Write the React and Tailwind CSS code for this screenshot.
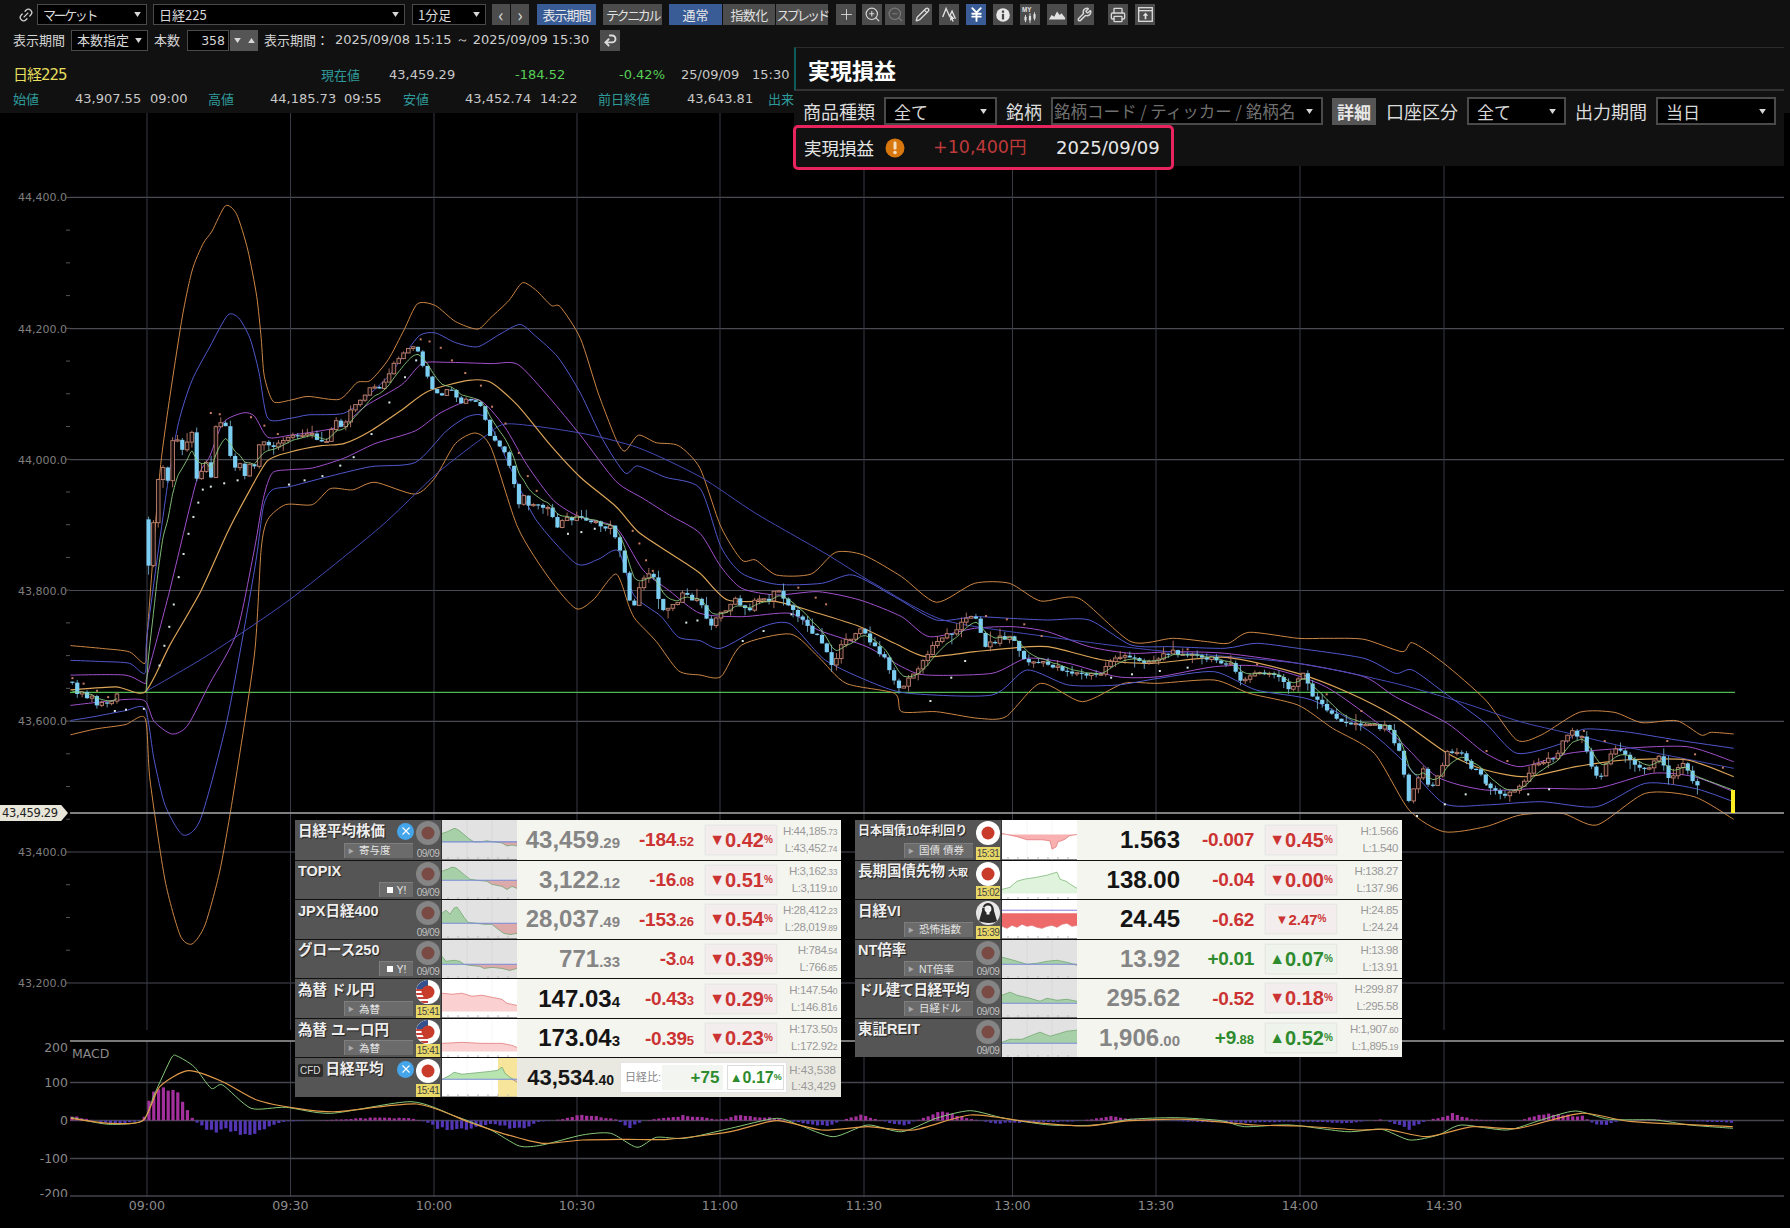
import React from "react";
import { Link2, Plus, ZoomIn, ZoomOut, Pencil, Wrench, Printer, JapaneseYen, Undo2 } from "lucide-react";

const c5 = (a) => a.map(([x, y]) => [x / 2.24, y / 2.376 + 170]);
const c7 = (a) => a.map(([x, y]) => [x / 1.4385 + 700, y / 3 + 400]);
const c6 = (a) => a.map(([x, y]) => [x / 0.876, y / 3 + 1030]);
const rnd = (i) => { const s = Math.sin(i * 12.9898) * 43758.5453; return s - Math.floor(s); };

function smooth(p) {
  let d = `M${p[0][0].toFixed(1)} ${p[0][1].toFixed(1)}`;
  for (let i = 0; i < p.length - 1; i++) {
    const a = p[Math.max(i - 1, 0)], b = p[i], c = p[i + 1], e = p[Math.min(i + 2, p.length - 1)];
    const t = 0.12;
    d += `C${(b[0] + (c[0] - a[0]) * t).toFixed(1)} ${(b[1] + (c[1] - a[1]) * t).toFixed(1)} ${(c[0] - (e[0] - b[0]) * t).toFixed(1)} ${(c[1] - (e[1] - b[1]) * t).toFixed(1)} ${c[0].toFixed(1)} ${c[1].toFixed(1)}`;
  }
  return d;
}
function interp(p, x) {
  if (x <= p[0][0]) return p[0][1];
  for (let i = 0; i < p.length - 1; i++) if (x <= p[i + 1][0]) {
    const t = (x - p[i][0]) / Math.max(p[i + 1][0] - p[i][0], 0.01);
    return p[i][1] + (p[i + 1][1] - p[i][1]) * t;
  }
  return p[p.length - 1][1];
}

const orangeUp = [...c5([[158,1130],[230,1137],[290,1145],[325,1172],[330,1100],[360,700],[405,370],[430,240],[455,175],[475,145],[505,85],[530,105],[555,190],[575,300],[585,400],[592,490],[612,550],[650,547],[690,538],[760,545],[800,505],[830,500],[870,450],[905,380],[935,318],[975,322],[1020,360],[1070,378],[1100,350],[1140,310],[1170,268],[1200,285],[1235,322],[1255,325],[1300,400],[1340,530],[1380,640],[1400,668],[1430,630],[1470,648],[1520,655]]), ...c7([[0,205],[30,380],[60,480],[80,480],[110,525],[160,522],[195,457],[235,465],[290,530],[340,607],[395,550],[445,550],[490,603],[545,595],[620,725],[680,715],[730,725],[760,730],[790,697],[860,715],[900,715],[955,718],[1010,755],[1025,728],[1070,790],[1130,900],[1175,1020],[1210,1005],[1265,937],[1315,937],[1355,968],[1405,962],[1440,1005],[1455,997],[1487,1002]])];
const blueUp = [...c5([[158,1165],[230,1168],[290,1172],[325,1195],[330,1100],[375,750],[400,600],[430,500],[470,420],[510,345],[535,352],[560,400],[580,480],[600,590],[650,590],[690,582],[770,578],[820,540],[870,490],[905,440],[940,393],[975,387],[1020,410],[1070,420],[1120,390],[1165,367],[1200,395],[1250,445],[1300,530],[1350,640],[1400,720],[1428,703],[1490,730]]), ...c7([[0,265],[30,440],[60,520],[110,553],[175,550],[220,525],[280,590],[340,660],[395,650],[445,655],[500,660],[560,660],[620,735],[680,740],[755,745],[800,730],[860,745],[955,775],[1000,820],[1025,810],[1075,885],[1130,970],[1175,1060],[1240,1030],[1270,988],[1330,995],[1405,1020],[1487,1045]])];
const purpleUp = [...c5([[158,1200],[280,1200],[325,1220],[330,1200],[380,1000],[440,740],[470,680],[500,600],[545,577],[570,585],[600,635],[650,630],[760,610],[820,560],[900,510],[945,460],[1000,457],[1100,460],[1160,462],[1230,540],[1300,630],[1380,740],[1440,780],[1500,820]]), ...c7([[0,400],[30,500],[60,565],[110,585],[170,575],[230,600],[290,650],[330,710],[395,685],[450,680],[500,695],[560,740],[620,760],[680,755],[755,760],[860,790],[955,830],[1000,890],[1075,970],[1130,1060],[1180,1100],[1250,1060],[1330,1045],[1420,1040],[1487,1085]])];
const mid = [...c5([[158,1235],[260,1228],[325,1240],[380,1130],[450,1000],[510,860],[560,760],[600,690],[650,670],[720,655],[770,650],[830,620],[900,570],[960,525],[1050,500],[1100,505],[1160,560],[1230,650],[1300,730],[1380,800],[1430,860],[1500,910]]), ...c7([[0,520],[40,600],[110,605],[170,640],[230,680],[280,730],[325,770],[395,755],[445,745],[500,740],[580,780],[650,790],[755,772],[860,820],[930,875],[1000,950],[1075,1060],[1130,1110],[1190,1130],[1260,1100],[1330,1080],[1420,1080],[1487,1130]])];
const purpleDn = [...c5([[158,1272],[280,1258],[325,1262],[345,1310],[385,1340],[420,1320],[470,1220],[530,1100],[570,900],[590,780],[610,720],[650,712],[700,708],[770,685],[840,650],[930,620],[990,575],[1070,545],[1130,610],[1180,700],[1240,785],[1300,825],[1380,850],[1440,950],[1500,1000]]), ...c7([[0,640],[60,650],[130,640],[170,690],[240,740],[290,800],[325,825],[420,820],[470,775],[530,790],[600,830],[660,830],[740,800],[810,800],[900,860],[1000,1010],[1060,1130],[1130,1170],[1210,1165],[1290,1165],[1370,1120],[1430,1130],[1487,1175]])];
const blueDn = [...c5([[158,1308],[215,1298],[280,1285],[325,1280],[345,1400],[370,1510],[410,1580],[450,1540],[510,1300],[570,950],[590,800],[610,760],[650,752],[730,730],[830,705],[930,695],[1000,620],[1050,585],[1090,590],[1140,700],[1200,830],[1290,935],[1340,925],[1385,905],[1420,1010],[1480,1060],[1520,1110]]), ...c7([[0,722],[30,745],[90,680],[130,672],[180,780],[250,850],[300,880],[420,885],[470,810],[530,855],[600,855],[660,835],[740,815],[800,870],[880,900],[960,990],[1010,1080],[1070,1210],[1130,1215],[1210,1205],[1290,1220],[1360,1150],[1430,1165],[1487,1205]])];
const orangeDn = [...c5([[158,1342],[215,1328],[280,1318],[325,1303]]), [150,780],[165,880],[180,935],[192,944],[205,925],[220,870],[234,790], ...c5([[570,1150],[585,900],[600,830],[640,795],[700,795],[740,757],[790,760],[840,742],[930,770],[975,730],[1020,650],[1065,625],[1100,660],[1160,850],[1230,970],[1290,1042],[1330,1020],[1380,960],[1410,1040],[1425,1070],[1470,1120],[1520,1190]]), ...c7([[0,825],[30,830],[60,735],[130,702],[170,770],[210,850],[280,880],[290,935],[340,935],[400,955],[440,950],[490,850],[550,905],[610,850],[660,850],[740,840],[790,880],[860,915],[910,985],[970,1060],[1020,1230],[1070,1295],[1130,1280],[1180,1245],[1240,1240],[1290,1275],[1360,1180],[1430,1190],[1487,1258]])];
const longMa = [...c5([[325,1240],[470,1150],[650,1020],[850,850],[980,720],[1090,630],[1140,603],[1300,625],[1430,660]]), ...c7([[0,230],[80,340],[180,460],[250,550],[350,660],[500,710],[650,750],[860,790],[1000,850],[1100,910],[1180,965],[1250,1000],[1330,1040],[1487,1105]])];

const pricePre = c5([[162,1218],[173,1245],[184,1240],[195,1255],[206,1250],[217,1272],[228,1265],[240,1268],[250,1262],[262,1245]]);
const price = [...c5([[333,940],[345,825],[355,730],[366,705],[378,745],[387,640],[397,640],[408,665],[420,650],[430,628],[441,740],[452,720],[462,690],[473,730],[484,608],[495,595],[506,610],[517,690],[528,712],[537,700],[547,735],[558,705],[570,700],[580,660],[590,650],[601,660],[620,655],[640,640],[660,630],[680,635],[700,630],[720,650],[735,640],[750,600],[770,610],[790,565],[810,550],[830,515],[850,520],[865,490],[885,460],[905,430],[920,415],[935,420],[945,465],[957,495],[975,535],[990,530],[1010,525],[1030,550],[1050,545],[1075,550],[1085,590],[1095,625],[1115,660],[1130,670],[1148,725],[1160,795],[1170,770],[1190,800],[1210,790],[1230,810],[1245,850],[1265,830],[1290,825],[1320,830],[1340,845],[1370,850],[1385,885],[1395,925],[1407,1020],[1420,1035],[1438,965],[1465,965],[1480,1040],[1500,1040],[1530,1010],[1550,1020]]), ...c7([[0,595],[15,680],[30,640],[50,600],[70,640],[80,590],[100,600],[112,565],[130,620],[150,670],[175,720],[190,795],[205,735],[230,685],[250,740],[270,790],[285,870],[300,840],[320,790],[340,720],[360,700],[380,660],[398,650],[410,740],[430,715],[450,710],[465,780],[490,790],[515,800],[530,815],[555,825],[575,825],[595,770],[620,775],[650,785],[670,760],[695,755],[720,775],[745,780],[765,790],[775,850],[795,820],[830,825],[850,870],[868,820],[880,890],[905,930],[920,970],[960,970],[990,985],[1005,1050],[1020,1200],[1040,1100],[1050,1180],[1075,1055],[1095,1060],[1110,1100],[1135,1155],[1160,1185],[1180,1160],[1200,1090],[1230,1070],[1250,990],[1270,1010],[1285,1110],[1295,1140],[1305,1075],[1320,1040],[1335,1080],[1360,1110],[1380,1070],[1395,1135],[1415,1090],[1425,1130],[1440,1170]])];

const buildCandles = () => {
  const out = [];
  let prev = pricePre[0][1] - 1;
  for (let i = 0; i < pricePre.length; i++) {
    const [x, y] = pricePre[i];
    out.push({ x, o: prev, c: y, hi: Math.min(prev, y) - rnd(i) * 3, lo: Math.max(prev, y) + rnd(i + 9) * 4 });
    prev = y;
  }
  prev = c5([[333, 830]])[0][1];
  const end = (1440 / 1.4385) + 700;
  for (let k = 0; 148.6 + 4.81 * k < end; k++) {
    const x = 148.6 + 4.81 * k;
    const c = interp(price, x) + (k > 6 ? (rnd(k + 40) - 0.5) * 5.5 : 0);
    out.push({ x, o: prev, c, hi: Math.min(prev, c) - rnd(k + 3) * rnd(k + 5) * 11, lo: Math.max(prev, c) + rnd(k + 11) * rnd(k + 13) * 11 });
    prev = c;
  }
  return out;
};
const candles = buildCandles();

const fast = (() => {
  const o = []; let e = 695;
  for (const c of candles) { e = e + (c.c - e) * 0.32; o.push([c.x, e]); }
  return o;
})();
const fastPre = fast.slice(0, pricePre.length);
const fastMain = [[146, 692], ...fast.slice(pricePre.length), [1733, 790]];

const dotsWhite = [...c5([[255,1283],[280,1280],[320,1278],[355,1175],[366,1128],[377,1083],[387,1030],[398,965],[409,910],[420,862],[431,822],[442,788],[452,757],[470,750],[500,742],[530,735],[645,745],[680,735],[720,725],[760,700],[790,680],[830,625],[870,550],[905,490],[930,450],[1270,862],[1300,858],[1330,850],[1535,1073],[1560,1068]]), ...c7([[60,720],[90,690],[130,640],[330,900],[360,830],[380,780],[590,830],[620,820],[660,810],[700,800],[1030,1245],[1070,1210],[1100,1180],[1130,1150],[1190,1180],[1220,1165]])];
const dotsRed = [...c5([[160,1205],[185,1218],[215,1235],[240,1250],[470,575],[490,578],[560,585],[590,605],[620,625],[940,400],[960,405],[985,420],[1010,450],[1040,480],[1075,510],[1100,560],[1130,600],[1160,670],[1180,725],[1200,760],[1415,855],[1430,885],[1445,925],[1460,950]]), ...c7([[140,560],[165,590],[180,610],[410,645],[440,655],[465,670],[490,705],[700,745],[760,770],[800,790],[900,880],[950,930],[990,980],[1130,1050],[1160,1080],[1270,990],[1300,1020],[1390,1020],[1430,1060],[1470,1100]])];

const macdG = c6([[62,262],[95,283],[125,272],[135,195],[150,85],[155,78],[170,110],[185,175],[195,165],[220,235],[250,232],[290,250],[360,215],[400,260],[430,300],[455,348],[475,345],[510,315],[535,310],[558,352],[575,322],[600,325],[640,295],[680,265],[700,285],[730,320],[760,285],[790,305],[820,265],[850,242],[880,265],[920,285],[960,285],[990,268],[1030,263],[1070,272],[1090,290],[1130,285],[1180,305],[1210,298],[1235,330],[1260,315],[1280,285],[1320,300],[1350,270],[1380,243],[1410,268],[1450,270],[1480,285],[1518,295]]);
const macdO = c6([[62,265],[95,280],[125,272],[140,170],[165,122],[195,155],[225,210],[260,235],[295,245],[365,222],[410,275],[440,310],[475,340],[510,330],[550,328],[585,328],[640,305],[680,272],[720,300],[760,290],[800,300],[850,255],[900,275],[950,288],[990,272],[1040,268],[1100,285],[1140,288],[1190,300],[1215,298],[1250,320],[1290,290],[1330,295],[1385,250],[1430,275],[1518,290]]);
const histEnv = [[62,5],[100,-4],[125,0],[132,26],[140,36],[155,25],[170,0],[185,-11],[195,-9],[215,-15],[235,-6],[250,-1],[300,1],[320,2.5],[360,2.5],[375,-2],[385,-9],[410,-8],[430,-3],[455,-9],[470,-2],[490,1],[510,6],[540,1],[550,-8],[565,0],[600,5],[630,1],[650,5.5],[680,2],[700,-2],[725,-7],[740,1],[755,6],[775,-1],[790,-6],[805,1],[825,9],[850,2],[870,-3],[900,-2],[940,-1],[975,4],[1000,1],[1040,-1],[1090,-2.5],[1130,-1],[1180,-2.5],[1210,1],[1235,-8],[1250,0],[1275,7],[1290,1],[1330,0],[1350,6],[1385,5],[1400,-6],[1420,0],[1450,1],[1490,-1],[1518,-2]].map(([x, h]) => [x / 0.876, h]);

const hist = (() => {
  const o = [];
  for (let x = 72; x < 1735; x += 4.81) {
    const h = interp(histEnv, x) * (0.75 + rnd(Math.round(x)) * 0.45);
    if (Math.abs(h) > 0.3) o.push([x, h]);
  }
  return o;
})();

function Chart() {
  const hLines = [197.4, 328.7, 459.6, 590.5, 721.3, 852, 983];
  const hLabels = ["44,400.0", "44,200.0", "44,000.0", "43,800.0", "43,600.0", "43,400.0", "43,200.0"];
  const vLines = [147, 290.5, 434, 577, 720, 864, 1012.5, 1156, 1300, 1444];
  const times = ["09:00", "09:30", "10:00", "10:30", "11:00", "11:30", "13:00", "13:30", "14:00", "14:30"];
  const ticks = [];
  for (let i = 0; i < 25; i++) ticks.push(197.4 + i * 32.73);
  return (
    <svg viewBox="0 113 1790 1115" className="block w-[1790px] h-[1115px]">
      {hLines.map((y) => <line key={y} x1="70" x2="1784" y1={y} y2={y} stroke="#484a54" strokeWidth="1.2" />)}
      {vLines.map((x) => <line key={x} x1={x} x2={x} y1="113" y2="1197" stroke="#383a46" strokeWidth="1" />)}
      {ticks.map((y) => <line key={y} x1="66" x2="70" y1={y} y2={y} stroke="#555" />)}
      {hLabels.map((t, i) => <text key={t} x="67" y={hLines[i] + 4} textAnchor="end" fill="#7e7e7e" fontSize="11" fontFamily="DejaVu Sans, sans-serif">{t}</text>)}
      <line x1="70" x2="1735" y1="692.4" y2="692.4" stroke="#4fb84f" strokeWidth="1.3" />
      {[[orangeUp, "#cc8644"], [orangeDn, "#cc8644"], [blueUp, "#5058cc"], [blueDn, "#5058cc"], [purpleUp, "#a050cc"], [purpleDn, "#a050cc"], [longMa, "#444ab4"]].map(([p, col], i) => (
        <path key={i} d={smooth(p)} fill="none" stroke={col} strokeWidth="1" />
      ))}
      <path d={smooth(mid)} fill="none" stroke="#dba458" strokeWidth="1.2" />
      {dotsWhite.map(([x, y], i) => <rect key={i} x={x} y={y} width="2" height="2" fill="#d8e8e8" />)}
      {dotsRed.map(([x, y], i) => <rect key={i} x={x} y={y} width="2" height="2" fill="#c87c62" />)}
      {candles.map((c, i) => {
        const up = c.c < c.o;
        const top = Math.min(c.o, c.c);
        const h = Math.max(Math.abs(c.o - c.c), 1.2);
        return (
          <g key={i}>
            <line x1={c.x} x2={c.x} y1={c.hi} y2={c.lo} stroke={up ? "#b87868" : "#6fa8c8"} strokeWidth="0.9" />
            {up
              ? <rect x={c.x - 1.8} y={top} width="3.6" height={h} fill="#1a0f0c" stroke="#c08272" strokeWidth="0.9" />
              : <rect x={c.x - 2.1} y={top} width="4.2" height={h} fill="#7ccdf2" />}
          </g>
        );
      })}
      <path d={smooth(fastPre)} fill="none" stroke="#8ccf80" strokeWidth="0.9" />
      <path d={smooth(fastMain)} fill="none" stroke="#8ccf80" strokeWidth="0.9" />
      <line x1="70" x2="1784" y1="813" y2="813" stroke="#a8a8a8" strokeWidth="1.5" />
      <rect x="1731" y="790" width="4" height="23" fill="#ffee22" />

      <rect x="0" y="1030" width="1790" height="11" fill="#000" />
      <text x="68" y="1052" textAnchor="end" fill="#888" fontSize="12.5" fontFamily="DejaVu Sans, sans-serif">200</text>
      <rect x="0" y="1036" width="1790" height="5" fill="#000" />
      <line x1="70" x2="1784" y1="1041" y2="1041" stroke="#a0a0a0" strokeWidth="1.6" />
      {[[1082.5, "100", 4], [1120.5, "0", 4], [1158.5, "-100", 4], [1196, "-200", 2]].map(([y, t, d]) => (
        <g key={t}>
          <line x1="70" x2="1784" y1={y} y2={y} stroke="#44464f" strokeWidth="1.4" />
          <text x="68" y={y + d} textAnchor="end" fill="#888" fontSize="12.5" fontFamily="DejaVu Sans, sans-serif">{t}</text>
        </g>
      ))}
      <rect x="0" y="1197" width="70" height="10" fill="#000" />
      <text x="72" y="1058" fill="#8a8a8a" fontSize="12.5" fontFamily="DejaVu Sans, sans-serif">MACD</text>
      {hist.map(([x, h], i) => (
        <rect key={i} x={x - 1.6} y={h > 0 ? 1120.5 - h : 1120.5} width="3.2" height={Math.abs(h)} fill={h > 0 ? "#a3309c" : "#5236b4"} />
      ))}
      <path d={smooth(macdG)} fill="none" stroke="#86c878" strokeWidth="1" />
      <path d={smooth(macdO)} fill="none" stroke="#e09a48" strokeWidth="1.2" />
      {times.map((t, i) => (
        <text key={t} x={vLines[i]} y="1210" textAnchor="middle" fill="#8c8c8c" fontSize="12.6" fontFamily="DejaVu Sans, sans-serif">{t}</text>
      ))}
    </svg>
  );
}

const Tri = ({ className = "" }) => (
  <svg viewBox="0 0 8 6" className={"w-[7px] h-[5px] " + className}><path d="M0 0h8L4 6z" fill="#d8d8d8" /></svg>
);

function Drop({ w, label, narrow, big }) {
  return (
    <div className={`${w} flex items-center justify-between border border-[#4a4a4a] bg-black text-[#d8d8d8] ${big ? "h-[28px] px-[8px] text-[17px] border-2" : "h-[21px] px-[5px] text-[13px]"}`}>
      <span className={`${narrow ? "tracking-[-2.4px]" : ""} whitespace-nowrap`}>{label}</span>
      <Tri />
    </div>
  );
}

const TB = ({ className = "", children }) => (
  <div className={`h-[21px] flex items-center justify-center text-[13px] whitespace-nowrap ${className}`}>{children}</div>
);

const Ico = ({ ml, blue, children }) => (
  <div className={`${ml} w-[20px] h-[21px] flex items-center justify-center ${blue ? "bg-[#3a5c96]" : "bg-[#4c4c4c]"} text-[#d8d8d8]`}>{children}</div>
);

function Toolbar() {
  return (
    <div className="flex items-center pl-[18px] pt-[4px] h-[25px]">
      <Link2 size={16} className="text-[#cfcfcf] -rotate-45 mr-[3px] shrink-0" />
      <Drop w="w-[110px]" label="マーケット" narrow />
      <div className="ml-[6px]"><Drop w="w-[252px]" label="日経225" /></div>
      <div className="ml-[7px]"><Drop w="w-[74px]" label="1分足" /></div>
      <TB className="ml-[6px] w-[18px] bg-[#4c4c4c] text-[#ddd] !text-[18px] leading-none pb-[2px]">‹</TB>
      <TB className="ml-[1px] w-[18px] bg-[#4c4c4c] text-[#ddd] !text-[18px] leading-none pb-[2px]">›</TB>
      <TB className="ml-[8px] w-[59px] bg-[#3a5c96] text-[#e8e8e8] tracking-[-1px]">表示期間</TB>
      <TB className="ml-[7px] w-[59px] bg-[#4c4c4c] text-[#e0e0e0] tracking-[-2.4px]">テクニカル</TB>
      <TB className="ml-[7px] w-[53px] bg-[#3a5c96] text-[#e8e8e8]">通常</TB>
      <TB className="ml-[1px] w-[52px] bg-[#4c4c4c] text-[#e0e0e0] tracking-[-0.6px]">指数化</TB>
      <TB className="ml-[1px] w-[52px] bg-[#4c4c4c] text-[#e0e0e0] tracking-[-2.8px]">スプレッド</TB>
      <Ico ml="ml-[8px]"><Plus size={17} strokeWidth={1.3} /></Ico>
      <Ico ml="ml-[6px]"><ZoomIn size={17} strokeWidth={1.6} /></Ico>
      <Ico ml="ml-[3px]"><ZoomOut size={17} strokeWidth={1.6} className="text-[#7c7c7c]" /></Ico>
      <Ico ml="ml-[7px]"><Pencil size={15} strokeWidth={2.2} /></Ico>
      <Ico ml="ml-[7px]">
        <svg viewBox="0 0 20 20" className="w-[17px] h-[17px]"><path d="M2 13 6 3l4 9 3-6 4 9" fill="none" stroke="#e0e0e0" strokeWidth="1.6" /><path d="M11 10l5 5-2.2.3L15 18l-1.5.6-1.2-2.6-1.6 1.5z" fill="#e8e8e8" /></svg>
      </Ico>
      <Ico ml="ml-[7px]" blue><JapaneseYen size={17} strokeWidth={2.6} className="text-white" /></Ico>
      <Ico ml="ml-[7px]">
        <svg viewBox="0 0 20 20" className="w-[16px] h-[16px]"><circle cx="10" cy="10" r="8.5" fill="#e8e8e8" /><rect x="8.6" y="8.6" width="2.8" height="7" fill="#444" /><rect x="8.6" y="4.4" width="2.8" height="2.8" fill="#444" /></svg>
      </Ico>
      <Ico ml="ml-[7px]">
        <svg viewBox="0 0 20 20" className="w-[18px] h-[18px]"><text x="1" y="6.5" fontSize="7" fontWeight="700" fill="#e0e0e0" fontFamily="Liberation Sans, sans-serif">MY</text><path d="M5 10v8M10 8v11M15 7v9" stroke="#e0e0e0" /><rect x="3.8" y="12" width="2.4" height="4" fill="#e0e0e0" /><rect x="8.8" y="11" width="2.4" height="5" fill="#e0e0e0" /><rect x="13.8" y="9" width="2.4" height="5" fill="#e0e0e0" /></svg>
      </Ico>
      <Ico ml="ml-[7px]">
        <svg viewBox="0 0 20 20" className="w-[18px] h-[18px]"><path d="M1 15l3-5 3 2 3-6 3 4 2-2 4 5v2H1z" fill="#e0e0e0" /></svg>
      </Ico>
      <Ico ml="ml-[7px]"><Wrench size={15} strokeWidth={2.4} /></Ico>
      <Ico ml="ml-[14px]"><Printer size={16} strokeWidth={2} /></Ico>
      <Ico ml="ml-[7px]">
        <svg viewBox="0 0 20 20" className="w-[17px] h-[17px]"><rect x="2" y="2" width="16" height="16" fill="none" stroke="#e0e0e0" strokeWidth="1.5" /><path d="M2 5.5h16" stroke="#e0e0e0" strokeWidth="1.5" /><path d="M10 7.5l3.2 4H11v4H9v-4H6.800z" fill="#e0e0e0" /></svg>
      </Ico>
    </div>
  );
}

function PeriodRow() {
  return (
    <div className="flex items-center pl-[13px] mt-[3px] h-[24px] text-[13px] text-[#d4d4d4]">
      <span className="w-[58px]">表示期間</span>
      <Drop w="w-[77px]" label="本数指定" />
      <span className="ml-[6px] w-[33px]">本数</span>
      <div className="w-[42px] h-[21px] border border-[#4a4a4a] bg-black text-right pr-[3px] [font-family:'DejaVu_Sans',sans-serif] text-[12.5px] leading-[19px]">358</div>
      <div className="w-[14px] h-[21px] bg-[#555] flex items-center justify-center ml-[1px]"><Tri /></div>
      <div className="w-[14px] h-[21px] bg-[#555] flex items-center justify-center"><Tri className="rotate-180" /></div>
      <span className="ml-[6px] w-[71px]">表示期間：</span>
      <span className="[font-family:'DejaVu_Sans',sans-serif] whitespace-nowrap w-[265px] text-[#cfcfcf]">2025/09/08 15:15 ～ 2025/09/09 15:30</span>
      <div className="w-[20px] h-[21px] bg-[#4c4c4c] flex items-center justify-center"><Undo2 size={15} strokeWidth={3} className="-scale-y-100 text-[#ddd]" /></div>
    </div>
  );
}

const M = ({ className = "", children }) => (
  <span className={`[font-family:'DejaVu_Sans',sans-serif] whitespace-nowrap text-[#c8c8c8] ${className}`}>{children}</span>
);
const L = ({ className = "", children }) => <span className={`text-[#2f9a9a] whitespace-nowrap ${className}`}>{children}</span>;

function Quote() {
  return (
    <div className="text-[13px]">
      <div className="flex items-center h-[24px] mt-[11px] pl-[13px]">
        <span className="text-[#e6df5e] text-[15px] w-[308px] [font-family:'DejaVu_Sans','Noto_Sans_CJK_JP',sans-serif] tracking-[-1px]">日経225</span>
        <L className="w-[68px]">現在値</L>
        <M className="w-[126px]">43,459.29</M>
        <M className="w-[104px] !text-[#57cf57]">-184.52</M>
        <M className="w-[62px] !text-[#57cf57]">-0.42%</M>
        <M className="w-[71px]">25/09/09</M>
        <M>15:30</M>
      </div>
      <div className="flex items-center h-[24px] pl-[13px] whitespace-nowrap">
        <L className="w-[62px]">始値</L>
        <M className="w-[75px]">43,907.55</M>
        <M className="w-[58px]">09:00</M>
        <L className="w-[62px]">高値</L>
        <M className="w-[74px]">44,185.73</M>
        <M className="w-[59px]">09:55</M>
        <L className="w-[62px]">安値</L>
        <M className="w-[75px]">43,452.74</M>
        <M className="w-[58px]">14:22</M>
        <L className="w-[89px]">前日終値</L>
        <M className="w-[81px]">43,643.81</M>
        <L>出来</L>
      </div>
    </div>
  );
}

function Panel() {
  return (
    <div className="absolute left-[794px] top-[47px] w-[990px] h-[119px] bg-[#111] z-10 [font-family:'Noto_Sans_CJK_JP',sans-serif]">
      <div className="h-[44px] border-t border-t-[#2c2c2c] border-l-2 border-l-[#0f5a5a] border-b-2 border-b-[#333] flex items-center pl-[12px]">
        <span className="text-[22px] font-bold text-white leading-none">実現損益</span>
      </div>
      <div className="flex items-center h-[30px] mt-[5px] pl-[9px] text-[18px] text-[#dcdcdc] leading-none">
        <span className="w-[81px]">商品種類</span>
        <Drop w="w-[113px]" label="全て" big />
        <span className="ml-[9px] w-[45px]">銘柄</span>
        <div className="w-[272px] h-[28px] border-2 border-[#4a4a4a] bg-black flex items-center justify-between pl-[1px] pr-[8px] text-[#707070] text-[16.5px] whitespace-nowrap">
          <span>銘柄コード / ティッカー / 銘柄名</span><Tri />
        </div>
        <div className="ml-[9px] w-[44px] h-[27px] bg-[#555] flex items-center justify-center font-bold text-[17px] text-[#e8e8e8]">詳細</div>
        <span className="ml-[10px] w-[81px]">口座区分</span>
        <Drop w="w-[99px]" label="全て" big />
        <span className="ml-[9px] w-[81px]">出力期間</span>
        <Drop w="w-[120px]" label="当日" big />
      </div>
    </div>
  );
}

function Result() {
  return (
    <div className="absolute left-[793px] top-[125px] w-[381px] h-[45px] border-[3px] border-[#e8245e] rounded-[5px] bg-[#111] z-20 flex items-center pl-[8px] [font-family:'Noto_Sans_CJK_JP',sans-serif] text-[17.5px] text-[#e4e4e4] leading-none">
      <span className="w-[81px] whitespace-nowrap">実現損益</span>
      <svg viewBox="0 0 20 20" className="w-[20px] h-[20px] shrink-0"><circle cx="10" cy="10" r="9.500" fill="#d9770f" /><rect x="8.500" y="3.500" width="3" height="8" rx="1.200" fill="#f4e0c0" /><circle cx="10" cy="14.500" r="1.800" fill="#f4e0c0" /></svg>
      <span className="ml-[28px] w-[123px] text-[#bf3a3a] [font-family:'DejaVu_Sans','Noto_Sans_CJK_JP',sans-serif] whitespace-nowrap">+10,400円</span>
      <span className="[font-family:'DejaVu_Sans',sans-serif] text-[18px] text-[#e8e8e8]">2025/09/09</span>
    </div>
  );
}

function Spark({ pts, base, closed, mode, color, noBase, yellow, topLine }) {
  const last = pts[pts.length - 1], first = pts[0];
  const line = pts.map((p) => p.join(",")).join(" ");
  const greenF = closed ? "#a8d0a8" : "#b8e4b0";
  const redF = closed ? "#dcaaaa" : "#f8b8b8";
  let fills = null;
  if (mode === "under") {
    fills = <polygon points={`${first[0]},32 ${line} ${last[0]},32`} fill={color === "green" ? "#e0f3dc" : "#fad0d0"} />;
  } else if (mode === "top") {
    fills = <polygon points={`${first[0]},${base} ${line} ${last[0]},${base}`} fill={color === "strong" ? "#ee6a6a" : "#f8b0b0"} />;
  } else {
    const a = pts.map(([x, y]) => `${x},${Math.min(y, base)}`).join(" ");
    const b = pts.map(([x, y]) => `${x},${Math.max(y, base)}`).join(" ");
    fills = <>
      <polygon points={`${first[0]},${base} ${a} ${last[0]},${base}`} fill={greenF} />
      <polygon points={`${first[0]},${base} ${b} ${last[0]},${base}`} fill={redF} />
    </>;
  }
  const lineCol = mode === "top" || mode === "under" ? (color === "green" ? "#6fb06a" : "#e07070") : "#6aa06a";
  return (
    <svg viewBox="0 0 75 38" preserveAspectRatio="none" className="block w-full h-full">
      <rect width="75" height="38" fill={closed ? "#e2e2e2" : "#ffffff"} />
      {yellow && <rect x="56" width="19" height="38" fill="#f6e59a" />}
      {[25, 50].map((x) => <line key={x} x1={x} x2={x} y1="0" y2="38" stroke={closed ? "#cfcfcf" : "#eee"} strokeWidth="0.5" />)}
      {fills}
      <polyline points={line} fill="none" stroke={lineCol} strokeWidth="0.7" />
      {!noBase && mode !== "under" && <line x1="0" x2="75" y1={base} y2={base} stroke="#7a8ad8" strokeWidth="1" />}
      {topLine && <line x1="0" x2="75" y1={topLine} y2={topLine} stroke="#8a7ad8" strokeWidth="1" />}
      {[5, 15, 25, 35, 45, 55, 65].map((x) => <rect key={x} x={x} y="36" width="2" height="1" fill="#bbb" />)}
    </svg>
  );
}

const XBadge = () => (
  <span className="w-[17px] h-[17px] rounded-full bg-[#45a5ea] flex items-center justify-center shrink-0">
    <svg viewBox="0 0 10 10" className="w-[10px] h-[10px]"><path d="M1.500 1.500l7 7M8.500 1.500l-7 7" stroke="#fff" strokeWidth="1.100" /></svg>
  </span>
);

function Dot({ type, id }) {
  if (type === "closed") return (
    <svg viewBox="0 0 24 24" className="w-[24px] h-[24px]"><circle cx="12" cy="12" r="12" fill="#858585" /><circle cx="12" cy="12" r="6.500" fill="#7a4a44" /></svg>
  );
  if (type === "open") return (
    <svg viewBox="0 0 24 24" className="w-[24px] h-[24px]"><circle cx="12" cy="12" r="12" fill="#fff" /><circle cx="12" cy="12" r="6.500" fill="#c83a2a" /></svg>
  );
  if (type === "flag") return (
    <svg viewBox="0 0 24 24" className="w-[24px] h-[24px]">
      <defs><clipPath id={id}><path d="M12 0a12 12 0 0 0 0 24z" /></clipPath></defs>
      <circle cx="12" cy="12" r="12" fill="#fff" />
      <g clipPath={`url(#${id})`}>
        <rect width="12" height="24" fill="#fff" />
        {[9, 13, 17, 21].map((y) => <rect key={y} y={y} width="12" height="2" fill="#c8403a" />)}
        <rect width="12" height="9" fill="#35508f" />
      </g>
      <circle cx="12" cy="12" r="6.500" fill="#c83a2a" />
    </svg>
  );
  return (
    <svg viewBox="0 0 24 24" className="w-[24px] h-[24px]">
      <circle cx="12" cy="12" r="12" fill="#e8e8e8" />
      <path d="M12 2c-4 0-6 4-6 8l-3 10c3 2 15 3 18 0l-3-10c0-4-2-8-6-8z" fill="#2a2a2a" />
      <circle cx="12" cy="8" r="3.400" fill="#f4f4f4" />
      <path d="M3 5l10 3M3 5l-1 14" stroke="#ddd" strokeWidth="0.800" fill="none" />
      <rect x="10.500" y="11" width="3" height="2.500" fill="#f4f4f4" />
    </svg>
  );
}

const Sub = ({ children, w = "w-[69px]" }) => (
  <div className={`${w} h-[15px] bg-[#6b6b6b] border-t border-l border-[#7e7e7e] flex items-center text-[10.5px] text-[#e4e4e4] leading-none whitespace-nowrap`}>
    <span className="text-[6px] text-[#aaa] ml-[3px] mr-[5px]">▶</span>{children}
  </div>
);
const Yf = () => (
  <div className="w-[34px] h-[15px] bg-[#6b6b6b] border-t border-l border-[#7e7e7e] flex items-center justify-center gap-[4px] text-[10.5px] text-[#e4e4e4] leading-none">
    <span className="w-[6px] h-[6px] bg-white" />Y!
  </div>
);

function Row({ r, i, prefix }) {
  const up = r.dir === "up";
  const col = up ? "text-[#2e8b2e]" : "text-[#cc3333]";
  const sub = r.sub === "Y" ? <Yf /> : r.sub ? <Sub>{r.sub}</Sub> : null;
  return (
    <div className={`flex min-h-0 ${i > 0 ? "border-t border-t-[#111]" : ""}`}>
      <div className="w-[146px] bg-[#555] flex pl-[3px] pr-[1px] pt-[1px] shrink-0">
        <div className="flex-1 min-w-0 flex flex-col justify-between pb-[2px]">
          <div className="flex items-center justify-between h-[20px] pr-[2px] overflow-hidden whitespace-nowrap">
            <span className={`text-[#eee] font-bold leading-none [text-shadow:1px_1px_1px_#222] ${r.nameClass || "text-[14.5px]"}`}>
              {r.cfd && <span className="bg-[#2c2c2c] text-[#ddd] text-[10px] font-normal px-[2px] py-[1px] mr-[3px] rounded-[2px]">CFD</span>}
              {r.name}{r.small && <span className="text-[10px] ml-[3px]">{r.small}</span>}
            </span>
            {r.x && <XBadge />}
          </div>
          {sub && <div className="flex justify-end pr-[3px]">{sub}</div>}
        </div>
        <div className="w-[24px] flex flex-col items-center justify-between shrink-0">
          <Dot type={r.icon} id={`${prefix}-${i}`} />
          <span className={`w-[24px] text-center text-[10px] tracking-[-0.5px] leading-[13px] whitespace-nowrap ${r.icon === "closed" ? "text-[#c0c0c0]" : "bg-[#e8d868] text-[#444]"}`}>{r.label}</span>
        </div>
      </div>
      <div className="w-[76px] shrink-0 border-l border-[#333]"><Spark {...r.spark} closed={r.icon === "closed"} /></div>
      {r.cfd ? (
        <div className="flex-1 bg-[#e9e9e2] flex items-center">
          <div className="w-[97px] text-right text-[#161616] font-bold text-[22px] leading-none">{r.main}<span className="text-[14px]">{r.dec}</span></div>
          <div className="ml-[6px] w-[167px] h-[31px] bg-white flex items-center pl-[4px] pr-[2px] border border-[#e4e4e4]">
            <span className="text-[11px] text-[#888] w-[37px] whitespace-nowrap">日経比:</span>
            <div className="w-[62px] h-[25px] bg-[#f3f5f0] text-right pr-[4px] text-[#2e8b2e] font-bold text-[17px] leading-[25px]">+75</div>
            <div className="ml-[4px] w-[57px] h-[25px] border border-[#ddd] flex items-center justify-center text-[#2e8b2e] font-bold text-[16px] leading-none whitespace-nowrap"><span className="text-[13px]">▲</span>0.17<span className="text-[9px]">%</span></div>
          </div>
          <div className="flex-1 text-right pr-[5px] text-[#999] text-[11.5px] leading-[16px] whitespace-nowrap">
            <div>{r.h}</div><div>{r.l}</div>
          </div>
        </div>
      ) : (
        <div className="flex-1 bg-[#f5f5f0] flex items-center">
          <div className={`w-[103px] text-right font-bold leading-none text-[24px] ${r.icon === "closed" ? "text-[#858585]" : "text-[#141414]"}`}>
            {r.main}<span className="text-[15px]">{r.dec}</span>
          </div>
          <div className={`w-[74px] text-right font-bold leading-none text-[19px] tracking-[-0.3px] ${col}`}>
            {r.ch}<span className="text-[13px] tracking-normal">{r.chd}</span>
          </div>
          <div className={`ml-[11px] w-[72px] h-[30px] border border-[#e8e8e4] shadow-[0_0_1px_#ccc] flex items-center justify-center font-bold leading-none whitespace-nowrap ${up ? "bg-[#eef3ec]" : "bg-[#f3eded]"} ${col} ${r.pctSmall ? "text-[15px]" : "text-[20px]"}`}>
            <span className={r.pctSmall ? "text-[13px]" : "text-[16px]"}>{up ? "▲" : "▼"}</span>{r.pct}<span className="text-[10px]">%</span>
          </div>
          <div className="flex-1 text-right pr-[4px] text-[#999] text-[11.5px] leading-[16px] whitespace-nowrap tracking-[-0.4px]">
            <div>{r.h}<span className="text-[8.5px]">{r.hd}</span></div>
            <div>{r.l}<span className="text-[8.5px]">{r.ld}</span></div>
          </div>
        </div>
      )}
    </div>
  );
}

const leftRows = [
  { name: "日経平均株価", x: true, sub: "寄与度", icon: "closed", label: "09/09", main: "43,459", dec: ".29", ch: "-184", chd: ".52", dir: "down", pct: "0.42", h: "H:44,185", hd: ".73", l: "L:43,452", ld: ".74", spark: { base: 21, pts: [[0,13],[6,11],[10,9],[13,8],[17,10],[22,14],[27,18],[32,21],[38,21],[45,20],[52,21],[60,22],[65,25],[70,24],[75,25]] } },
  { name: "TOPIX", sub: "Y", icon: "closed", label: "09/09", main: "3,122", dec: ".12", ch: "-16", chd: ".08", dir: "down", pct: "0.51", h: "H:3,162", hd: ".33", l: "L:3,119", ld: ".10", spark: { base: 19, pts: [[0,10],[6,8],[10,6],[14,7],[18,10],[24,15],[28,18],[35,19],[45,20],[50,23],[60,25],[65,28],[70,25],[75,27]] } },
  { name: "JPX日経400", icon: "closed", label: "09/09", main: "28,037", dec: ".49", ch: "-153", chd: ".26", dir: "down", pct: "0.54", h: "H:28,412", hd: ".23", l: "L:28,019", ld: ".89", spark: { base: 23, pts: [[0,13],[4,10],[8,14],[12,8],[15,7],[18,11],[22,17],[26,22],[35,23],[42,24],[50,24],[55,28],[62,33],[68,34],[75,33]] } },
  { name: "グロース250", sub: "Y", icon: "closed", label: "09/09", main: "771", dec: ".33", ch: "-3", chd: ".04", dir: "down", pct: "0.39", h: "H:784", hd: ".54", l: "L:766", ld: ".85", spark: { base: 24, pts: [[0,16],[4,21],[12,20],[18,21],[22,24],[28,25],[38,26],[42,28],[50,27],[60,28],[68,30],[75,28]] } },
  { name: "為替 ドル円", sub: "為替", icon: "flag", label: "15:41", main: "147.03", dec: "4", ch: "-0.43", chd: "3", dir: "down", pct: "0.29", h: "H:147.54", hd: "0", l: "L:146.81", ld: "6", spark: { mode: "under", pts: [[0,14],[10,15],[20,14],[30,17],[40,16],[50,18],[60,20],[65,24],[75,26]] } },
  { name: "為替 ユーロ円", sub: "為替", icon: "flag", label: "15:41", main: "173.04", dec: "3", ch: "-0.39", chd: "5", dir: "down", pct: "0.23", h: "H:173.50", hd: "3", l: "L:172.92", ld: "2", spark: { mode: "under", pts: [[0,24],[20,23],[40,24],[60,24],[70,26],[75,28]] } },
  { cfd: true, name: "日経平均", x: true, icon: "open", label: "15:41", main: "43,534", dec: ".40", h: "H:43,538", l: "L:43,429", dir: "up", spark: { base: 21, yellow: true, pts: [[0,21],[8,17],[12,14],[20,16],[30,15],[40,14],[50,13],[56,12],[60,9],[63,15],[68,19],[75,24]] } },
];
const rightRows = [
  { name: "日本国債10年利回り", nameClass: "text-[12px]", sub: "国債 債券", icon: "open", label: "15:31", main: "1.563", dec: "", ch: "-0.007", chd: "", dir: "down", pct: "0.45", h: "H:1.566", hd: "", l: "L:1.540", ld: "", spark: { mode: "top", base: 14, noBase: true, pts: [[0,13],[15,16],[25,19],[40,19],[48,20],[50,28],[54,26],[56,21],[62,19],[68,15],[75,14]] } },
  { name: "長期国債先物", small: "大取", icon: "open", label: "15:02", main: "138.00", dec: "", ch: "-0.04", chd: "", dir: "down", pct: "0.00", h: "H:138.27", hd: "", l: "L:137.96", ld: "", spark: { mode: "under", color: "green", pts: [[0,28],[8,26],[15,20],[22,18],[35,16],[45,14],[55,11],[58,18],[64,20],[70,24],[75,27]] } },
  { name: "日経VI", sub: "恐怖指数", icon: "reaper", label: "15:39", main: "24.45", dec: "", ch: "-0.62", chd: "", dir: "down", pct: "2.47", pctSmall: true, h: "H:24.85", hd: "", l: "L:24.24", ld: "", spark: { mode: "top", base: 13, noBase: true, color: "strong", topLine: 10, pts: [[0,26],[5,28],[10,25],[15,27],[20,24],[25,26],[30,25],[35,27],[40,28],[45,26],[50,25],[55,27],[60,24],[65,23],[70,26],[75,25]] } },
  { name: "NT倍率", sub: "NT倍率", icon: "closed", label: "09/09", main: "13.92", dec: "", ch: "+0.01", chd: "", dir: "up", pct: "0.07", h: "H:13.98", hd: "", l: "L:13.91", ld: "", spark: { base: 24, pts: [[0,17],[8,19],[15,21],[25,24],[35,23],[45,21],[55,20],[65,22],[75,25]] } },
  { name: "ドル建て日経平均", nameClass: "text-[14.5px] tracking-[-0.6px]", sub: "日経ドル", icon: "closed", label: "09/09", main: "295.62", dec: "", ch: "-0.52", chd: "", dir: "down", pct: "0.18", h: "H:299.87", hd: "", l: "L:295.58", ld: "", spark: { base: 24, pts: [[0,16],[8,13],[15,16],[28,19],[38,22],[45,19],[55,21],[65,20],[75,22]] } },
  { name: "東証REIT", icon: "closed", label: "09/09", main: "1,906", dec: ".00", ch: "+9", chd: ".88", dir: "up", pct: "0.52", h: "H:1,907", hd: ".60", l: "L:1,895", ld: ".19", spark: { base: 24, pts: [[0,23],[8,20],[20,20],[30,16],[38,13],[48,17],[55,15],[65,12],[75,11]] } },
];

function Board({ rows, prefix, className }) {
  return (
    <div className={`absolute z-10 grid [font-family:'Liberation_Sans','Noto_Sans_CJK_JP',sans-serif] ${className}`}>
      {rows.map((r, i) => <Row key={i} r={r} i={i} prefix={prefix} />)}
    </div>
  );
}

export default function App() {
  return (
    <div className="relative w-[1790px] h-[1228px] bg-black overflow-hidden [font-family:'Noto_Sans_CJK_JP',sans-serif]">
      <div className="h-[113px] bg-[#111] overflow-hidden">
        <Toolbar />
        <PeriodRow />
        <Quote />
      </div>
      <Chart />
      <Panel />
      <Result />
      <Board rows={leftRows} prefix="l" className="left-[295px] top-[820px] w-[546px] h-[277px] grid-rows-7" />
      <Board rows={rightRows} prefix="r" className="left-[855px] top-[820px] w-[547px] h-[237px] grid-rows-6" />
      <div className="absolute left-0 top-[805px] w-[68px] h-[16px] bg-[#e8e6d8] text-[#222] text-[11.5px] leading-[16px] pl-[2px] [font-family:'DejaVu_Sans',sans-serif] tracking-[-0.3px] [clip-path:polygon(0_0,90%_0,100%_50%,90%_100%,0_100%)]">43,459.29</div>
    </div>
  );
}
